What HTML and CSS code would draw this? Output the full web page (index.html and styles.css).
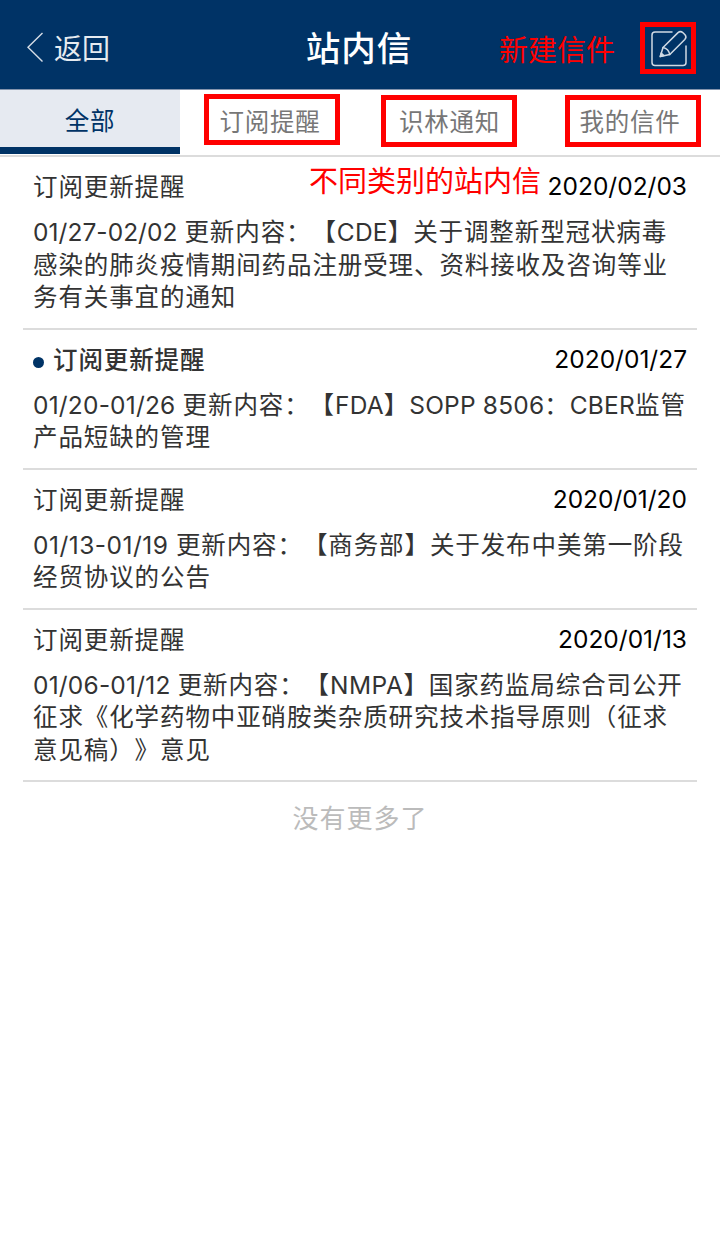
FILE: index.html
```html
<!doctype html>
<html lang="zh-CN">
<head>
<meta charset="utf-8">
<link rel="stylesheet" href="styles.css">
<title>站内信</title>
</head>
<body>
<header class="header">
    <a class="back">
        <svg class="back-icon" width="18" height="32" viewBox="0 0 18 32"><path d="M16.5 2L2 16.2L16.5 30.5" fill="none" stroke="#d5dde6" stroke-width="1.4"/></svg>
        <span>返回</span>
    </a>
    <h1 class="title">站内信</h1>
    <div class="actions">
        <span class="note note-new">新建信件</span>
        <a class="compose">
            <svg width="46" height="42" viewBox="0 0 46 42" fill="none" stroke="#d0dae4" stroke-width="1.5" stroke-linejoin="round" stroke-linecap="round">
                <path d="M27 5H10Q7 5 7 8V35.5Q7 38.5 10 38.5H38Q41 38.5 41 35.5V19"/>
                <path d="M18 20.5L33 5.6Q35.5 3.5 38 5.8L40 7.8Q42 10.2 39.8 12.5L24.8 27.5L15.3 29.5L18 20.5Z"/>
                <path d="M18 20.5Q23.5 21.5 24.8 27.5"/>
                <path d="M15.3 29.5L16.2 26L18.8 28.6Z" fill="#d0dae4"/>
            </svg>
        </a>
    </div>
</header>

<nav class="tabs">
    <a class="tab active"><span>全部</span></a>
    <a class="tab"><span class="mark mark-remind">订阅提醒</span></a>
    <a class="tab"><span class="mark mark-notice">识林通知</span></a>
    <a class="tab"><span class="mark mark-mine">我的信件</span></a>
</nav>

<main class="list">
    <span class="note note-types">不同类别的站内信</span>
    <article class="item">
        <div class="item-head"><h2>订阅更新提醒</h2><time>2020/02/03</time></div>
        <p><span class="latin tight">01/27-02/02 </span>更新内容：【<span class="latin">CDE</span>】关于调整新型冠状病毒<br>感染的肺炎疫情期间药品注册受理、资料接收及咨询等业<br>务有关事宜的通知</p>
    </article>
    <article class="item unread">
        <div class="item-head"><h2>订阅更新提醒</h2><time>2020/01/27</time></div>
        <p><span class="latin">01/20-01/26 </span>更新内容：【<span class="latin">FDA</span>】<span class="latin">SOPP 8506</span>：<span class="latin">CBER</span>监管<br>产品短缺的管理</p>
    </article>
    <article class="item">
        <div class="item-head"><h2>订阅更新提醒</h2><time>2020/01/20</time></div>
        <p><span class="latin wide">01/13-01/19 </span>更新内容：【商务部】关于发布中美第一阶段<br>经贸协议的公告</p>
    </article>
    <article class="item">
        <div class="item-head"><h2>订阅更新提醒</h2><time>2020/01/13</time></div>
        <p><span class="latin">01/06-01/12 </span>更新内容：【<span class="latin wide">NMPA</span>】国家药监局综合司公开<br>征求《化学药物中亚硝胺类杂质研究技术指导原则（征求<br>意见稿）》意见</p>
    </article>
</main>

<p class="no-more">没有更多了</p>
</body>
</html>
```

FILE: styles.css
```css
* {
    box-sizing: border-box;
}
body,
h1,
h2,
p {
    margin: 0;
    padding: 0;
}
body {
    background: #fff;
    font-family: "Noto Sans CJK SC", sans-serif;
    font-size: 24.5px;
    color: #333;
    text-spacing-trim: space-all;
}
.header {
    display: grid;
    grid-template-columns: 1fr auto 1fr;
    align-items: center;
    height: 90px;
    padding: 6px 24px 0 26px;
    background: #003366;
    border-bottom: 1px solid #8494ad;
    color: #fff;
}
.back {
    display: flex;
    align-items: center;
    gap: 10px;
    padding-bottom: 2px;
    font-size: 28px;
    line-height: 40px;
    color: #e6ebf0;
}
.title {
    margin-right: 4px;
    padding-bottom: 4px;
    font-size: 34.5px;
    font-weight: 500;
    line-height: 48px;
    letter-spacing: 1px;
}
.actions {
    display: flex;
    justify-content: flex-end;
    align-items: center;
    gap: 25px;
}
.note {
    color: #f00;
    font-size: 29px;
    line-height: 40px;
    white-space: nowrap;
}
.compose {
    display: flex;
    border: 5px solid #f00;
}
.tabs {
    display: flex;
    height: 67px;
    border-bottom: 2px solid #dcdcdc;
}
.tab {
    display: flex;
    justify-content: center;
    align-items: center;
    width: 180px;
    height: 64px;
    color: #777;
    letter-spacing: 0.8px;
    padding-bottom: 5px;
}
.tab.active {
    background: #e6eaf1;
    border-bottom: 7px solid #003366;
    color: #003366;
    padding: 2px 0 0;
}
.mark {
    display: flex;
    justify-content: center;
    align-items: center;
    flex: none;
    width: 136px;
    height: 52px;
    margin-top: 3px;
    padding-bottom: 2px;
    border: 5px solid #f00;
    white-space: nowrap;
}
.mark-remind {
    height: 51px;
    margin: 0 0 0 4px;
    padding: 1px 4px 0 0;
}
.mark-notice {
    margin-right: 2px;
    padding-left: 1px;
}
.mark-mine {
    margin-left: 6px;
    padding-right: 6px;
}
.list {
    position: relative;
    padding: 0 23px;
}
/* callout over the first row */
.note-types {
    position: absolute;
    left: 309px;
    top: 2px;
}
.item {
    padding: 12px 10px 14.6px;
    border-bottom: 2px solid #dcdcdc;
}
.item-head {
    display: flex;
    justify-content: space-between;
    height: 34px;
    line-height: 34px;
    margin-bottom: 12px;
}
.item h2 {
    font-size: 24.5px;
    font-weight: 400;
    letter-spacing: 0.9px;
}
.item time {
    font-family: Inter, sans-serif;
    color: #000;
    letter-spacing: 0;
}
.item p {
    line-height: 32.7px;
    letter-spacing: 0.9px;
    white-space: nowrap;
}
.latin {
    font-family: Inter, sans-serif;
    line-height: 1;
    letter-spacing: 0.2px;
}
.latin.tight {
    letter-spacing: 0.05px;
}
.latin.wide {
    letter-spacing: 0.5px;
}
.unread h2 {
    display: flex;
    align-items: center;
    font-weight: 500;
}
.unread h2:before {
    content: "";
    width: 11px;
    height: 11px;
    margin: 7px 9px 0 0;
    border-radius: 50%;
    background: #003366;
}
.no-more {
    padding-top: 16px;
    text-align: center;
    font-size: 26px;
    line-height: 38px;
    letter-spacing: 1px;
    color: #bbb;
}
```
